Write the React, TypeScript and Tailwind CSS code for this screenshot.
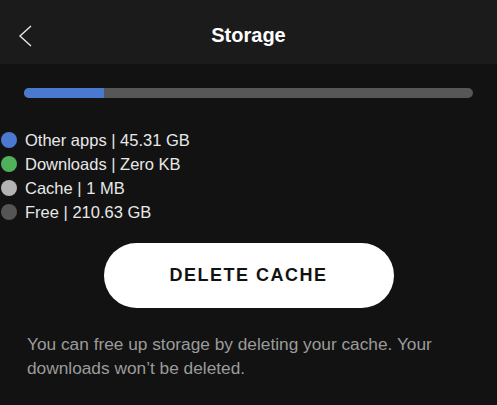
import React from 'react';

const legend = [
  { label: 'Other apps | 45.31 GB', color: 'bg-[#4a79cf]' },
  { label: 'Downloads | Zero KB', color: 'bg-[#4fb25a]' },
  { label: 'Cache | 1 MB', color: 'bg-[#b3b3b3]' },
  { label: 'Free | 210.63 GB', color: 'bg-[#555555]' },
];

export default function App() {
  return (
    <div className="w-[497px] h-[405px] overflow-hidden bg-[#121212] font-['Liberation_Sans',Arial,sans-serif] text-white">
      {/* Header */}
      <div className="relative flex h-16 items-center justify-center bg-[#1b1b1b]">
        <svg
          className="absolute left-[18px] top-[25px]"
          width="14"
          height="22"
          viewBox="0 0 14 22"
          fill="none"
          stroke="#e6e6e6"
          strokeWidth="1.4"
        >
          <path d="M13 1 L2 11 L13 21" />
        </svg>
        <h1 className="mt-[6px] text-[20px] font-bold leading-none">Storage</h1>
      </div>

      {/* Usage bar */}
      <div className="mx-6 mt-6 flex h-[10px] overflow-hidden rounded-full bg-[#575757]">
        <div className="h-full w-[80px] bg-[#4a79cf]" />
      </div>

      {/* Legend */}
      <div className="mt-[30px] flex flex-col pl-[1px]">
        {legend.map((item) => (
          <div key={item.label} className="flex h-6 items-center gap-2">
            <span className={`h-4 w-4 rounded-full ${item.color}`} />
            <span className="text-[16.5px] text-[#e8e8e8]">{item.label}</span>
          </div>
        ))}
      </div>

      {/* Delete button */}
      <button className="mx-auto mt-[19px] flex h-[65px] w-[290px] items-center justify-center rounded-full bg-white text-[18px] font-bold tracking-[1.5px] text-[#121212]">
        DELETE CACHE
      </button>

      <p className="mt-6 px-[27px] text-[17.3px] leading-6 text-[#9b9b9b]">
        You can free up storage by deleting your cache. Your downloads won’t be deleted.
      </p>
    </div>
  );
}
